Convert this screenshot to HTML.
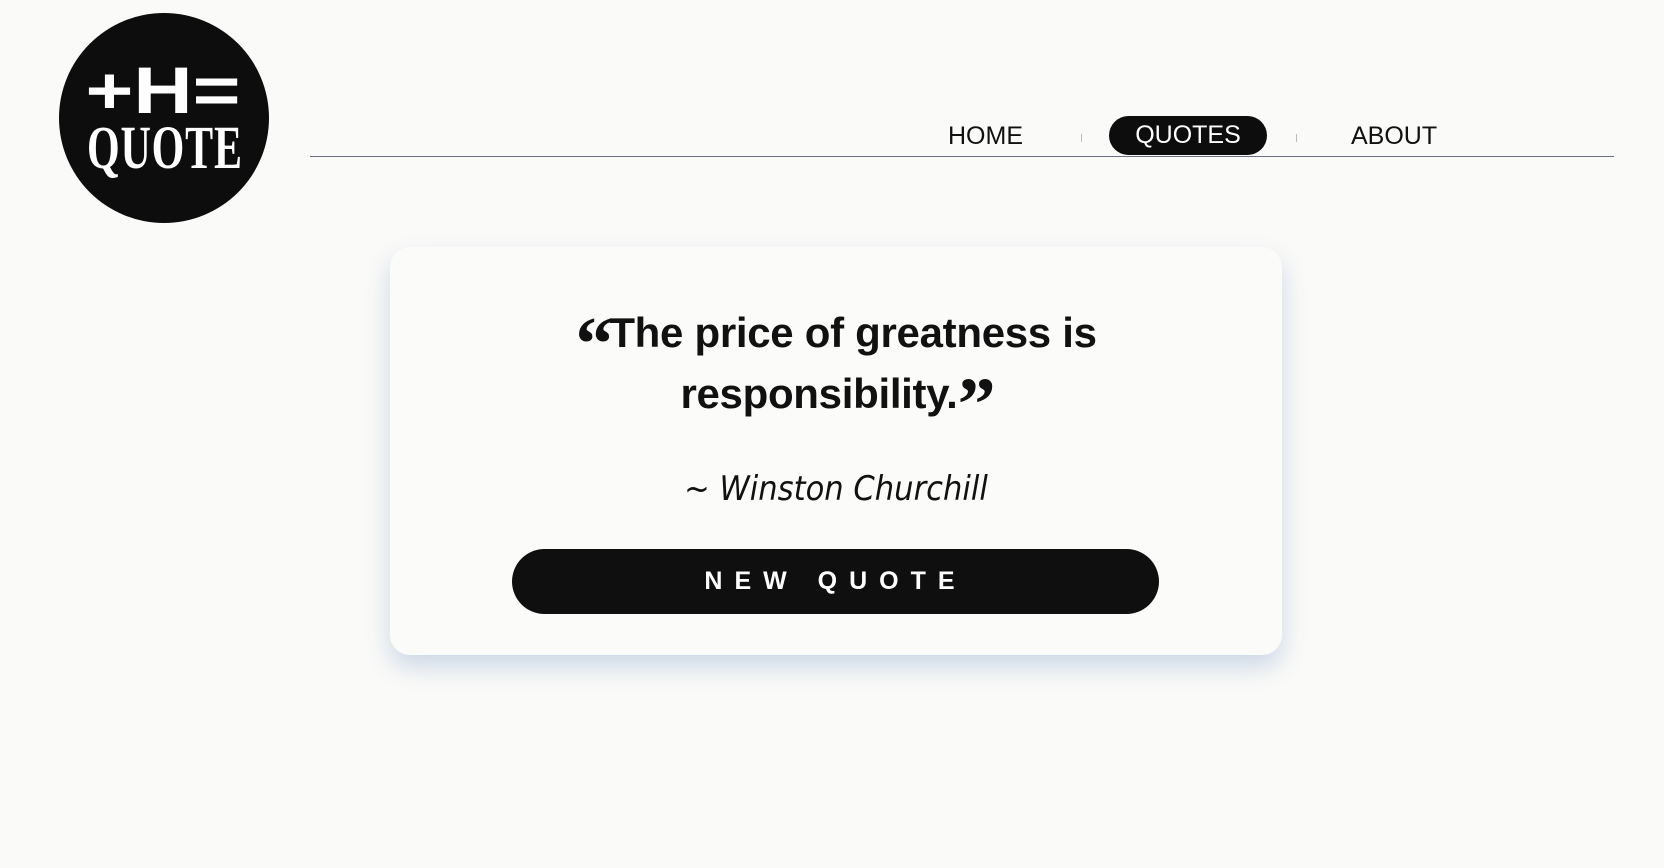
<!DOCTYPE html>
<html><head><style>
html,body{margin:0;padding:0;}
body{width:1664px;height:868px;background:#fafaf8;position:relative;overflow:hidden;font-family:"Liberation Sans",sans-serif;}
.logo{position:absolute;left:59px;top:13px;width:210px;height:210px;border-radius:50%;background:#0d0d0d;overflow:hidden;}
.logo .a{position:absolute;left:27px;top:50px;width:155px;height:52px;}
.logo .b{position:absolute;left:15px;top:104px;width:162px;text-align:center;color:#fff;font:bold 50px/1 "Liberation Serif",serif;transform:scale(0.84,1.22);transform-origin:center top;letter-spacing:1px;}
.line{position:absolute;left:310px;top:156px;width:1304px;height:1px;background:#6b6f86;}
.nav{position:absolute;top:118px;font-size:25px;color:#111;line-height:36px;}
.pill{position:absolute;left:1109px;top:116px;width:158px;height:39px;border-radius:20px;background:#0d0d0d;color:#fff;font-size:25px;line-height:39px;text-align:center;}
.sep{position:absolute;top:134px;width:1px;height:8px;background:#bbb;}
.card{position:absolute;left:390px;top:247px;width:892px;height:408px;background:#fbfbfa;border-radius:20px;box-shadow:0 12px 24px rgba(150,175,210,0.45);}
.q{position:absolute;left:0;top:55px;width:892px;text-align:center;font:bold 42px/61px "Liberation Sans",sans-serif;color:#111;letter-spacing:-0.3px;}
.qm{font-family:"Liberation Serif",serif;font-size:76px;font-weight:bold;vertical-align:-22px;line-height:0;letter-spacing:-4px;}
.auth{position:absolute;left:0;top:222px;width:892px;text-align:center;font:italic 34px "DejaVu Sans",sans-serif;color:#111;transform:scaleX(0.9);}
.btn{position:absolute;left:122px;top:302px;width:647px;height:65px;border-radius:33px;background:#0f0f0f;color:#fff;text-align:center;font:bold 25px/65px "Liberation Sans",sans-serif;letter-spacing:12px;}
</style></head><body>
<div class="logo">
<svg class="a" viewBox="0 0 155 52" width="155" height="52">
<text x="77" y="50" text-anchor="middle" fill="#fff" font-family="Liberation Sans" font-weight="bold" font-size="66" textLength="155" lengthAdjust="spacingAndGlyphs">+H=</text>
</svg>
<div class="b">QUOTE</div></div>
<div class="nav" style="left:948px">HOME</div>
<div class="sep" style="left:1081px"></div>
<div class="pill">QUOTES</div>
<div class="sep" style="left:1296px"></div>
<div class="nav" style="left:1351px">ABOUT</div>
<div class="line"></div>
<div class="card">
<div class="q"><span class="qm">“</span>The price of greatness is<br>responsibility.<span class="qm">”</span></div>
<div class="auth">~ Winston Churchill</div>
<div class="btn">NEW QUOTE</div>
</div>
</body></html>
